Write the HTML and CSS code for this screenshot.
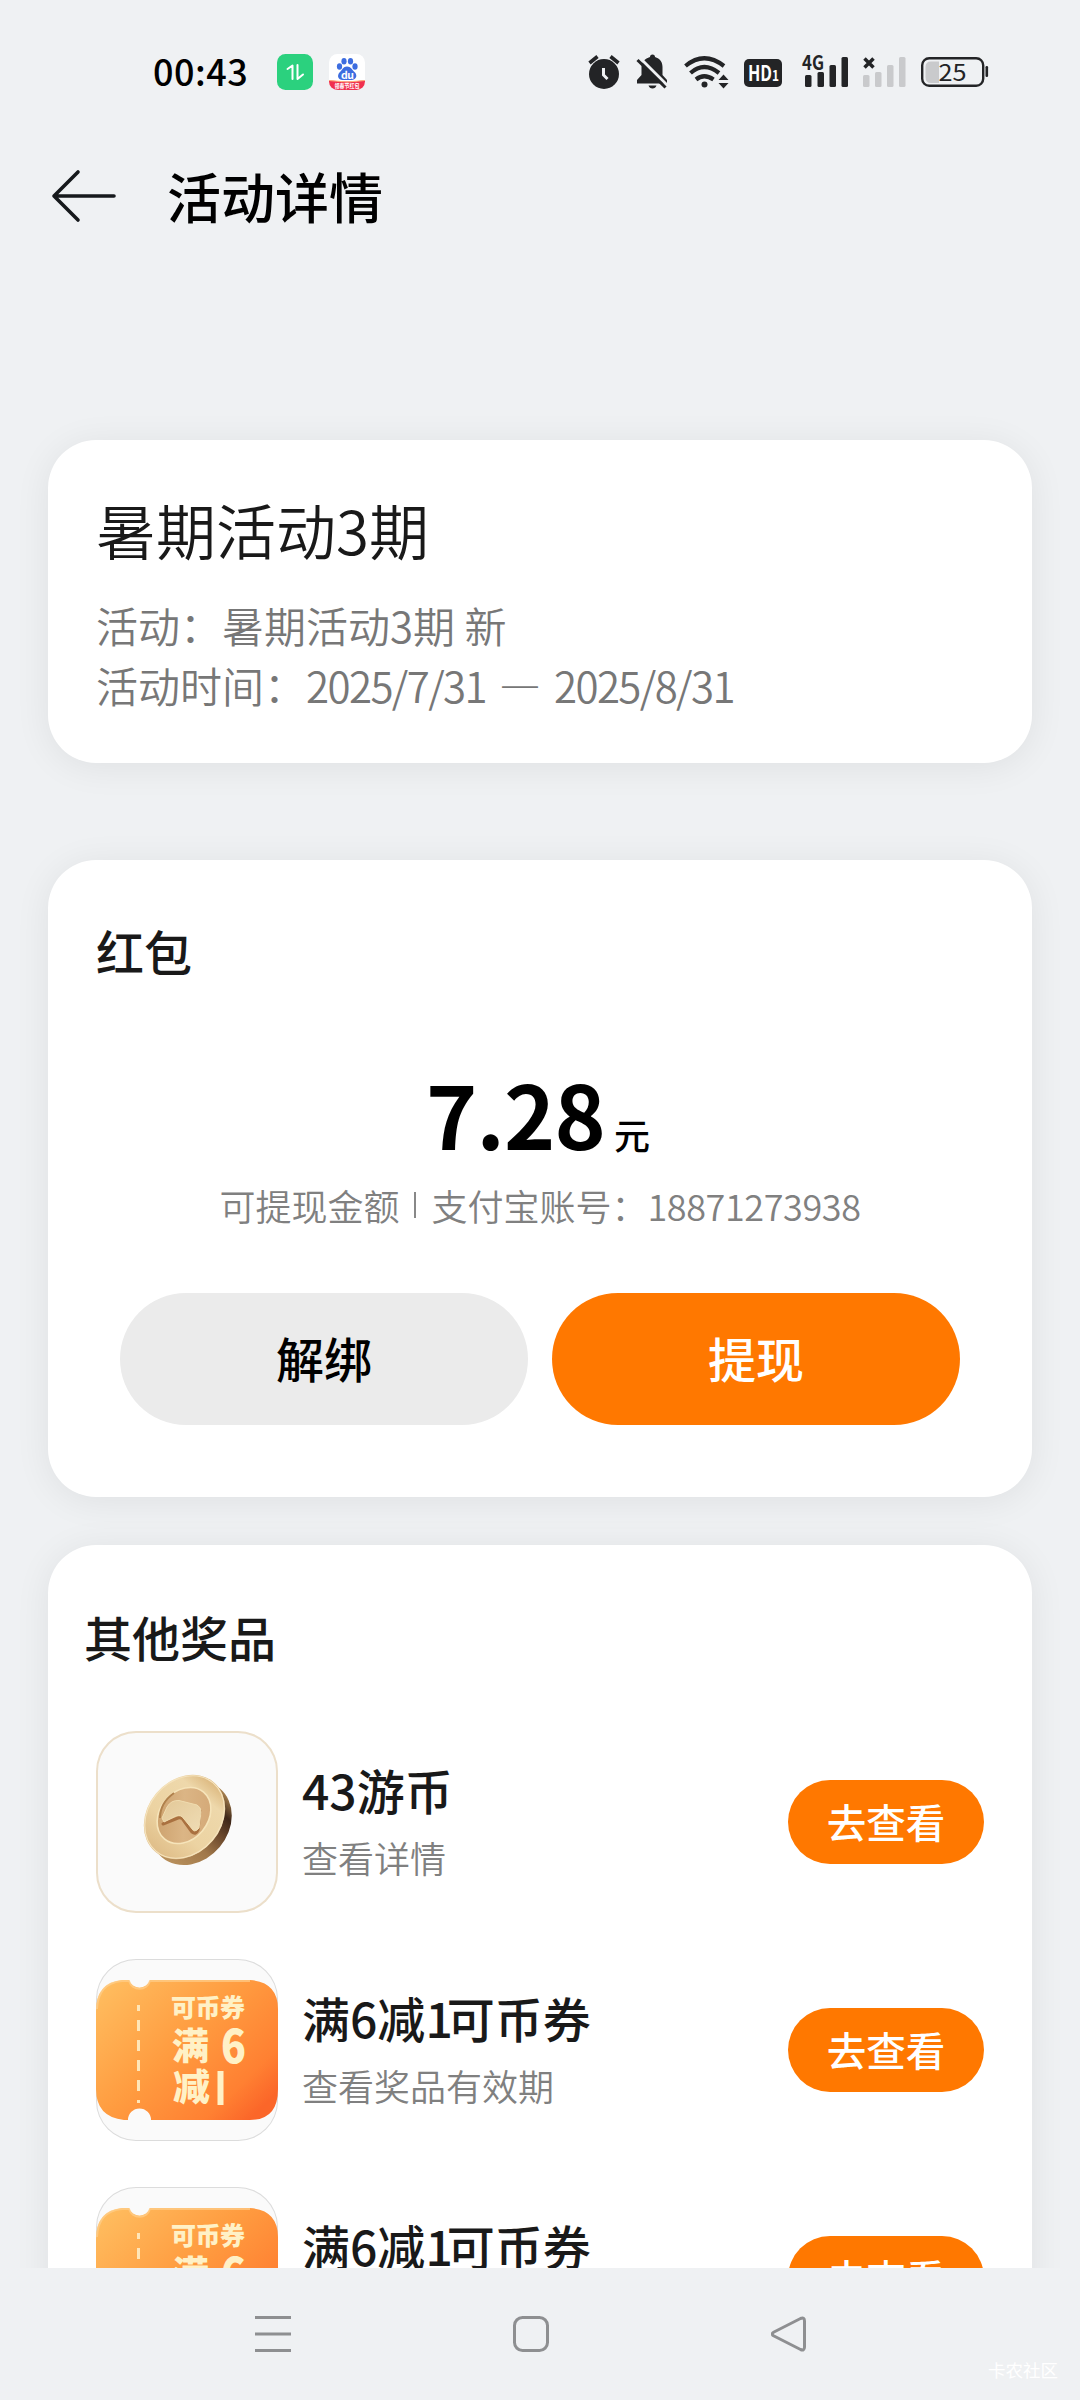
FILE: index.html
```html
<!DOCTYPE html>
<html lang="zh-CN">
<head>
<meta charset="utf-8">
<title>活动详情</title>
<link rel="stylesheet" href="styles.css">
</head>
<body>
<svg class="defs" width="0" height="0" aria-hidden="true">
  <defs>
    <linearGradient id="ticketFill" x1="0" y1="0" x2="1" y2="0.8">
      <stop offset="0" stop-color="#ffc062"/><stop offset="0.5" stop-color="#ff9c40"/><stop offset="0.85" stop-color="#ff8032"/><stop offset="1" stop-color="#fb6629"/>
    </linearGradient>
    <linearGradient id="coinFace" x1="0" y1="0" x2="1" y2="0">
      <stop offset="0" stop-color="#dfbd88"/><stop offset="0.35" stop-color="#ecd3a2"/><stop offset="0.8" stop-color="#eed8ab"/><stop offset="1" stop-color="#dcb87f"/>
    </linearGradient>
    <linearGradient id="coinEdge" x1="0" y1="0" x2="1" y2="0">
      <stop offset="0" stop-color="#b8905c"/><stop offset="0.35" stop-color="#a1784a"/><stop offset="0.6" stop-color="#6b482c"/><stop offset="0.8" stop-color="#3d2618"/><stop offset="1" stop-color="#a9824f"/>
    </linearGradient>
    <linearGradient id="coinWell" x1="0" y1="0" x2="1" y2="1">
      <stop offset="0" stop-color="#c89b66"/><stop offset="0.5" stop-color="#dbb585"/><stop offset="1" stop-color="#d2a573"/>
    </linearGradient>
    <linearGradient id="coinMark" x1="0" y1="0" x2="1" y2="1">
      <stop offset="0" stop-color="#e3c898"/><stop offset="1" stop-color="#efdcb4"/>
    </linearGradient>
    <symbol id="ticket" viewBox="0 0 182 182">
      <path d="M26 21H33A11 11 0 0 0 54 21H154Q182 23 182 50V130Q182 161 154 161H55A11 11 0 0 0 32 161H28Q0 158 0 130V52Q0 24 26 21Z" fill="url(#ticketFill)"/>
      <path d="M1 50Q2 24 26 22H33A11 11 0 0 0 54 22H154" fill="none" stroke="#ffcf8b" stroke-width="2" opacity=".7"/>
      <path d="M42.500 46V144" stroke="#ffe6b8" stroke-width="3" stroke-dasharray="11 9" stroke-dashoffset="5"/>
      <g class="ticket-text">
        <text x="75" y="58" font-size="25" textLength="74">可币券</text>
        <text x="76" y="101" font-size="37">满</text>
        <text x="125" y="104" font-size="46" textLength="25" lengthAdjust="spacingAndGlyphs">6</text>
        <text x="77" y="142" font-size="37">减</text>
      </g>
      <path d="M124.500 112V146" stroke="#fff1c6" stroke-width="6"/>
    </symbol>
  </defs>
</svg>
<div class="screen">
  <header class="status">
    <div class="status-left">
      <span class="clock">00:43</span>
      <svg class="app" viewBox="0 0 36 36"><rect width="36" height="36" rx="8.500" fill="#2bd17e"/><path d="M10.500 15L15.500 11.500V25M20.500 11V25L26 20.500" fill="none" stroke="#fff" stroke-width="2" stroke-linejoin="round" stroke-linecap="round"/></svg>
      <svg class="app baidu" viewBox="0 0 36 36">
        <clipPath id="appClip"><rect width="36" height="36" rx="8.500"/></clipPath>
        <g clip-path="url(#appClip)">
          <rect width="36" height="36" fill="#fff"/>
          <g fill="#3d6de0"><ellipse cx="10.500" cy="12.500" rx="2.600" ry="3.300"/><ellipse cx="15" cy="7.300" rx="2.600" ry="3.300"/><ellipse cx="21.500" cy="7.300" rx="2.600" ry="3.300"/><ellipse cx="26" cy="12.500" rx="2.600" ry="3.300"/><path d="M18 12.500C22 12.500 23 16 26 18.500C29 22 26.500 26 22.500 26H13.500C9.500 26 7.500 22 10.500 18.500C13.500 16 14 12.500 18 12.500Z"/></g>
          <text x="12" y="24.500" font-size="10.500" font-weight="700" fill="#fff" textLength="13">du</text>
          <path d="M0 26Q18 29 36 26V36H0Z" fill="#f0304e"/>
          <path d="M0 26.500Q18 29.500 36 26.500" fill="none" stroke="#ffb27c" stroke-width="1"/>
          <text x="5.500" y="34" font-size="6" font-weight="700" fill="#fff" textLength="25" lengthAdjust="spacingAndGlyphs">领春节红包</text>
        </g>
      </svg>
    </div>
    <svg class="status-icons" viewBox="584 50 408 42">
      <g fill="#232426">
        <circle cx="604" cy="74" r="15"/>
        <path d="M589.500 63L597.500 56.500M610.500 56.500L618.500 63" stroke="#232426" stroke-width="3.600"/>
        <path d="M603.500 68V75L607.500 79" fill="none" stroke="#eff1f3" stroke-width="3"/>
        <path d="M650 57A2.500 2.500 0 0 1 655 57C660 58.500 662.500 62 662.500 67V75L667 80V83.500H637V80L641.500 75V67C641.500 62 645 58.500 650 57ZM648.500 85.500H656.500Q655.500 88.500 652.500 88.500T648.500 85.500Z"/>
        <path d="M640 58L668 86" stroke="#eff1f3" stroke-width="3"/>
        <path d="M637.500 60L665.500 87.500" stroke="#232426" stroke-width="3"/>
        <g fill="none" stroke="#232426" stroke-width="4.200"><path d="M685.500 66Q704 50.500 724 66"/><path d="M690.500 73Q704 61 719 73"/><path d="M696 79.500Q704 73 713.500 79.500"/></g>
        <circle cx="704.500" cy="84.500" r="3"/>
        <path d="M718.500 80L723.500 74.500L728.500 80ZM718.500 83H728.500L723.500 88.500Z"/>
        <rect x="744" y="59" width="38" height="28" rx="5"/>
      </g>
      <text x="748" y="81" font-size="21.500" font-weight="700" fill="#fff" textLength="24" lengthAdjust="spacingAndGlyphs">HD</text>
      <text x="772" y="81" font-size="14" font-weight="700" fill="#fff" textLength="7" lengthAdjust="spacingAndGlyphs">1</text>
      <text x="802" y="70" font-size="20" font-weight="700" fill="#232426" textLength="22" lengthAdjust="spacingAndGlyphs">4G</text>
      <g fill="#232426"><rect x="805" y="75" width="6.500" height="12" rx="1.500"/><rect x="817.500" y="72" width="6.500" height="15" rx="1.500"/><rect x="829.500" y="65" width="6.500" height="22" rx="1.500"/><rect x="841.500" y="57" width="6.500" height="30" rx="1.500"/></g>
      <path d="M864.500 58.500L873.500 67.500M873.500 58.500L864.500 67.500" stroke="#232426" stroke-width="3.500"/>
      <g fill="#c9cacc"><rect x="863" y="75" width="6.500" height="12" rx="1.500"/><rect x="875" y="72" width="6.500" height="15" rx="1.500"/><rect x="887" y="65" width="6.500" height="22" rx="1.500"/><rect x="899" y="57" width="6.500" height="30" rx="1.500"/></g>
      <path d="M939 61.500H931Q925.500 61.500 925.500 67V77Q925.500 83 931 83H939Z" fill="#c9cacc"/>
      <rect x="922.200" y="58.200" width="61" height="27.600" rx="7" fill="none" stroke="#232426" stroke-width="2.400"/>
      <rect x="985.500" y="66" width="2.600" height="11" rx="1.200" fill="#232426"/>
      <text x="938.500" y="81" font-size="23.500" fill="#232426" textLength="28" lengthAdjust="spacingAndGlyphs">25</text>
    </svg>
  </header>

  <div class="titlebar">
    <svg class="back" viewBox="0 0 66 54"><path d="M27 3L3 27L27 51M3 27H63" fill="none" stroke="#16191c" stroke-width="3.600" stroke-linecap="round" stroke-linejoin="round"/></svg>
    <h1>活动详情</h1>
  </div>

  <main class="content">
    <section class="card info">
      <h2>暑期活动3期</h2>
      <p>活动：暑期活动3期 新</p>
      <p>活动时间：<span class="date">2025/7/31</span><span class="dash">—</span><span class="date">2025/8/31</span></p>
    </section>

    <section class="card packet">
      <h3>红包</h3>
      <div class="amount"><strong>7.28</strong><span>元</span></div>
      <div class="account"><span>可提现金额</span><i></i><span>支付宝账号：</span><span class="phone">18871273938</span></div>
      <div class="buttons">
        <button class="btn btn-plain">解绑</button>
        <button class="btn btn-main">提现</button>
      </div>
    </section>

    <section class="card prizes">
      <h3>其他奖品</h3>
      <ul>
        <li>
          <div class="thumb thumb-coin">
            <svg viewBox="0 0 182 182">
              <ellipse cx="95" cy="92" rx="45" ry="37.500" transform="rotate(-50 95 92)" fill="url(#coinEdge)"/>
              <ellipse cx="88.500" cy="86" rx="45.500" ry="37" transform="rotate(-50 88.500 86)" fill="url(#coinFace)"/>
              <ellipse cx="88.500" cy="86" rx="44.500" ry="36" transform="rotate(-50 88.500 86)" fill="none" stroke="#f5e3bd" stroke-width="1.200"/>
              <ellipse cx="88" cy="84.500" rx="30.500" ry="24" transform="rotate(-50 88 84.500)" fill="url(#coinWell)" stroke="#f6e4ba" stroke-width="1.600"/>
              <path d="M64 87Q64 72 78 62" stroke="#b0814c" stroke-width="2" fill="none"/>
              <path d="M67 93L82 87Q86 86 88 90L96 101Q100 104 102 99L104 80" fill="none" stroke="#aa7140" stroke-width="3" stroke-linecap="round" stroke-linejoin="round"/>
              <path d="M66 87L71 76Q75 69 83 69.500L101 74Q105 76 105 81L103 97Q101 101 97 99L88 88Q85 83 80 85L68 91Z" fill="url(#coinMark)" stroke="#f0dcb0" stroke-width="1"/>
            </svg>
          </div>
          <div class="desc"><h4>43游币</h4><p>查看详情</p></div>
          <button class="pill">去查看</button>
        </li>
        <li>
          <div class="thumb"><svg viewBox="0 0 182 182"><use href="#ticket"/></svg></div>
          <div class="desc"><h4>满6减<span class="one">1</span>可币券</h4><p>查看奖品有效期</p></div>
          <button class="pill">去查看</button>
        </li>
        <li>
          <div class="thumb"><svg viewBox="0 0 182 182"><use href="#ticket"/></svg></div>
          <div class="desc"><h4>满6减<span class="one">1</span>可币券</h4><p>查看奖品有效期</p></div>
          <button class="pill">去查看</button>
        </li>
      </ul>
    </section>
  </main>

  <nav class="navbar">
    <svg viewBox="0 0 36 36"><path d="M0 1.500H36M0 18H36M0 34.500H36"/></svg>
    <svg viewBox="0 0 36 36"><rect x="1.500" y="1.500" width="33" height="33" rx="8"/></svg>
    <svg viewBox="0 0 36 36"><path d="M3 16L29.500 2.500Q33.500 1 33.500 5V31Q33.500 35 29.500 33.500L3 20Q-0.500 18 3 16Z"/></svg>
    <span class="mark">卡农社区</span>
  </nav>
</div>
</body>
</html>
```
FILE: styles.css
```css
* { box-sizing: border-box; margin: 0; padding: 0; }
body { background: #eff1f3; font-family: "Noto Sans CJK SC", sans-serif; color: #191919; }
.defs { position: absolute; }
.screen { width: 1080px; height: 2400px; display: flex; flex-direction: column; overflow: hidden; }

.status { flex: none; height: 144px; padding: 0 88px 0 153px; display: flex; justify-content: space-between; align-items: center; }
.status-left { display: flex; align-items: center; }
.clock { width: 124px; font-size: 36px; line-height: 44px; font-weight: 500; color: #000; letter-spacing: .5px; margin-top: -4px; }
.app { width: 36px; height: 36px; }
.app.baidu { margin-left: 16px; }
.status-icons { width: 408px; height: 42px; margin-top: -2px; }

.titlebar { flex: none; height: 106px; padding: 0 0 2px 51px; display: flex; align-items: center; }
.back { width: 66px; height: 54px; }
.titlebar h1 { margin-left: 50px; font-size: 54px; line-height: 72px; font-weight: 500; color: #000; }

.content { flex: 1; min-height: 0; overflow: hidden; padding: 190px 48px 0; }
.card { background: #fff; border-radius: 48px; box-shadow: 0 4px 36px rgba(0, 0, 0, .07); }
.info { height: 323px; padding: 53px 48px 0; margin-bottom: 97px; }
.info h2 { font-size: 60px; line-height: 72px; font-weight: 350; margin-bottom: 30px; }
.info p { font-size: 42px; line-height: 60px; font-weight: 350; color: #777; white-space: nowrap; }
.date { letter-spacing: -1.6px; }
.dash { margin: 0 13px; }

.packet { height: 637px; padding: 60px 48px 0; margin-bottom: 48px; }
.card h3 { font-size: 48px; line-height: 60px; font-weight: 500; }
.amount { display: flex; justify-content: center; align-items: baseline; margin-top: 82px; height: 100px; color: #000; }
.amount strong { font-size: 87px; line-height: 100px; font-weight: 700; letter-spacing: -.8px; }
.amount span { font-size: 36px; font-weight: 500; margin: 0 4px 0 9px; }
.account { display: flex; justify-content: center; align-items: center; margin-top: 19px; font-size: 36px; line-height: 48px; font-weight: 350; color: #808080; }
.account i { width: 2px; height: 26px; background: #888; margin: 0 15px; }
.phone { letter-spacing: -.4px; }
.buttons { display: flex; gap: 24px; margin: 64px 24px 0; }
button { border: 0; font-family: inherit; font-weight: 500; }
.btn { flex: 1; height: 132px; border-radius: 66px; font-size: 48px; line-height: 60px; padding-bottom: 4px; }
.btn-plain { background: #ebebeb; color: #000; }
.btn-main, .pill { background: #ff7800; color: #fff; }

.prizes { height: 900px; padding: 61px 48px 0; }
.prizes h3 { margin-left: -12px; }
.prizes ul { list-style: none; margin-top: 65px; display: flex; flex-direction: column; gap: 46px; }
.prizes li { display: flex; align-items: center; height: 182px; }
.thumb { width: 182px; height: 182px; border-radius: 40px; background: #fafafa; overflow: hidden; box-shadow: inset 0 0 0 1px #dcdcdc; }
.thumb svg { display: block; width: 182px; height: 182px; }
.thumb-coin { box-shadow: inset 0 0 0 2px #ecdfca; }
.ticket-text { font-weight: 900; fill: #fff1c6; }
.desc { flex: 1; margin-left: 24px; padding-bottom: 4px; }
.desc h4 { font-size: 48px; line-height: 60px; font-weight: 500; }
.desc p { margin-top: 14px; font-size: 36px; line-height: 48px; font-weight: 350; color: #808080; }
.one { letter-spacing: -6px; }
.pill { width: 196px; height: 84px; border-radius: 42px; font-size: 39.5px; line-height: 48px; padding-bottom: 2px; }

.navbar { position: relative; flex: none; height: 132px; padding: 0 273px 0 255px; display: flex; justify-content: space-between; align-items: center; background: #eff1f3; }
.navbar svg { width: 36px; height: 36px; fill: none; stroke: #8e8f91; stroke-width: 3; }
.mark { position: absolute; right: 22px; bottom: 18px; font-size: 17.5px; line-height: 24px; color: #fff; }
```
